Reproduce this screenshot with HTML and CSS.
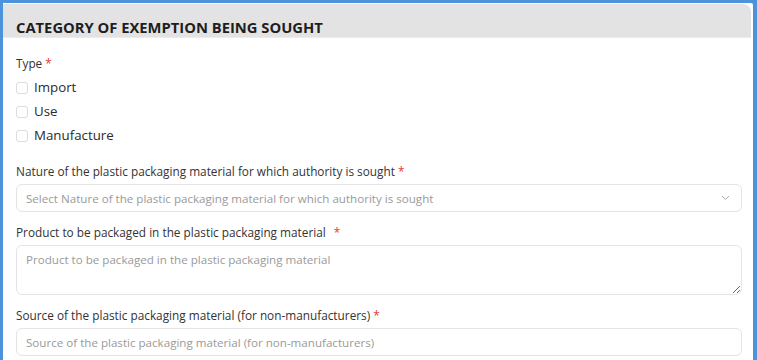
FILE: index.html
```html
<!DOCTYPE html>
<html lang="en">
<head>
  <meta charset="utf-8">
  <meta name="viewport" content="width=device-width, initial-scale=1">
  <title>Category of exemption</title>
  <link rel="stylesheet" href="styles.css">
</head>
<body>
  <section class="panel">
    <h2 class="panel__title">CATEGORY OF EXEMPTION BEING SOUGHT</h2>

    <div class="panel__body">
      <div class="field field--checks">
        <label class="field__label">Type <span class="req">*</span></label>
        <label class="check"><input type="checkbox"> Import</label>
        <label class="check"><input type="checkbox"> Use</label>
        <label class="check"><input type="checkbox"> Manufacture</label>
      </div>

      <div class="field">
        <label class="field__label" for="nature">Nature of the plastic packaging material for which authority is sought <span class="req">*</span></label>
        <div class="select">
          <span class="select__placeholder">Select Nature of the plastic packaging material for which authority is sought</span>
          <svg class="select__arrow" width="9" height="6" viewBox="0 0 9 6"><path d="M1 1l3.5 3.5L8 1" fill="none" stroke="#aaa" stroke-width="1"/></svg>
        </div>
      </div>

      <div class="field">
        <label class="field__label" for="product">Product to be packaged in the plastic packaging material <span class="req req--wide">*</span></label>
        <textarea id="product" class="input input--area" placeholder="Product to be packaged in the plastic packaging material"></textarea>
      </div>

      <div class="field">
        <label class="field__label" for="source">Source of the plastic packaging material (for non-manufacturers) <span class="req">*</span></label>
        <input id="source" class="input" type="text" placeholder="Source of the plastic packaging material (for non-manufacturers)">
      </div>
    </div>
  </section>
</body>
</html>
```

FILE: styles.css
```css
html, body {height:100%;}
body {
  margin:0;
  background:#4c93dc;
  font-family:"Open Sans", "DejaVu Sans", sans-serif;
  color:#333;
  overflow:hidden;
}

.panel {
  margin:3px 4px 0 3px;
  height:357px;
  background:#fff;
  border-radius:2px 2px 0 0;
}
.panel__title {
  margin:0 2px 0 0;
  padding:13px 13px 0;
  height:20px;
  line-height:20px;
  font-size:14.75px; font-weight:700;
  color:#1e1e1e;
  background:#e3e3e3;
  border-top:1px solid #fff;
  border-bottom:1px solid #ececec;
  border-radius:0 8px 0 0;
}
.panel__body {padding:17px 12px 0 13px;}

.field {margin-bottom:12px;}
.field--checks {margin-bottom:16px;}
.field__label {
  display:block;
  margin-bottom:5px;
  font-size:11.8px; line-height:16px;
  font-weight:500;
  color:#333;
}
.field--checks .field__label {margin-bottom:4px;}
.req {color:#e53935;}
.req--wide {margin-left:5px;}

.check {
  display:flex; align-items:center; gap:6px;
  height:24px;
  font-size:13.3px;
  color:#2b2b2b;
}
.check input {
  appearance:none;
  margin:1px 0 0 0;
  width:12px; height:12px;
  border:1px solid #dcdcdc; border-radius:3px;
  background:#fff;
}

.select, .input {
  box-sizing:border-box;
  width:726px;
  border:1px solid #e4e4e4; border-radius:6px;
  background:#fff;
  font-family:inherit;
  font-size:11.6px;
}
.select {
  display:flex; align-items:center; justify-content:space-between;
  height:28px;
  padding:0 11px 0 9px;
}
.select__placeholder {color:#9a9a9a;}
.select__arrow {display:block;}

.input {
  display:block;
  height:28px;
  padding:0 9px;
  color:#333;
  outline:none;
}
.input--area {
  height:50px;
  padding:6px 9px;
  line-height:16px;
  resize:vertical;
}
.input::placeholder {color:#9a9a9a;}
```
